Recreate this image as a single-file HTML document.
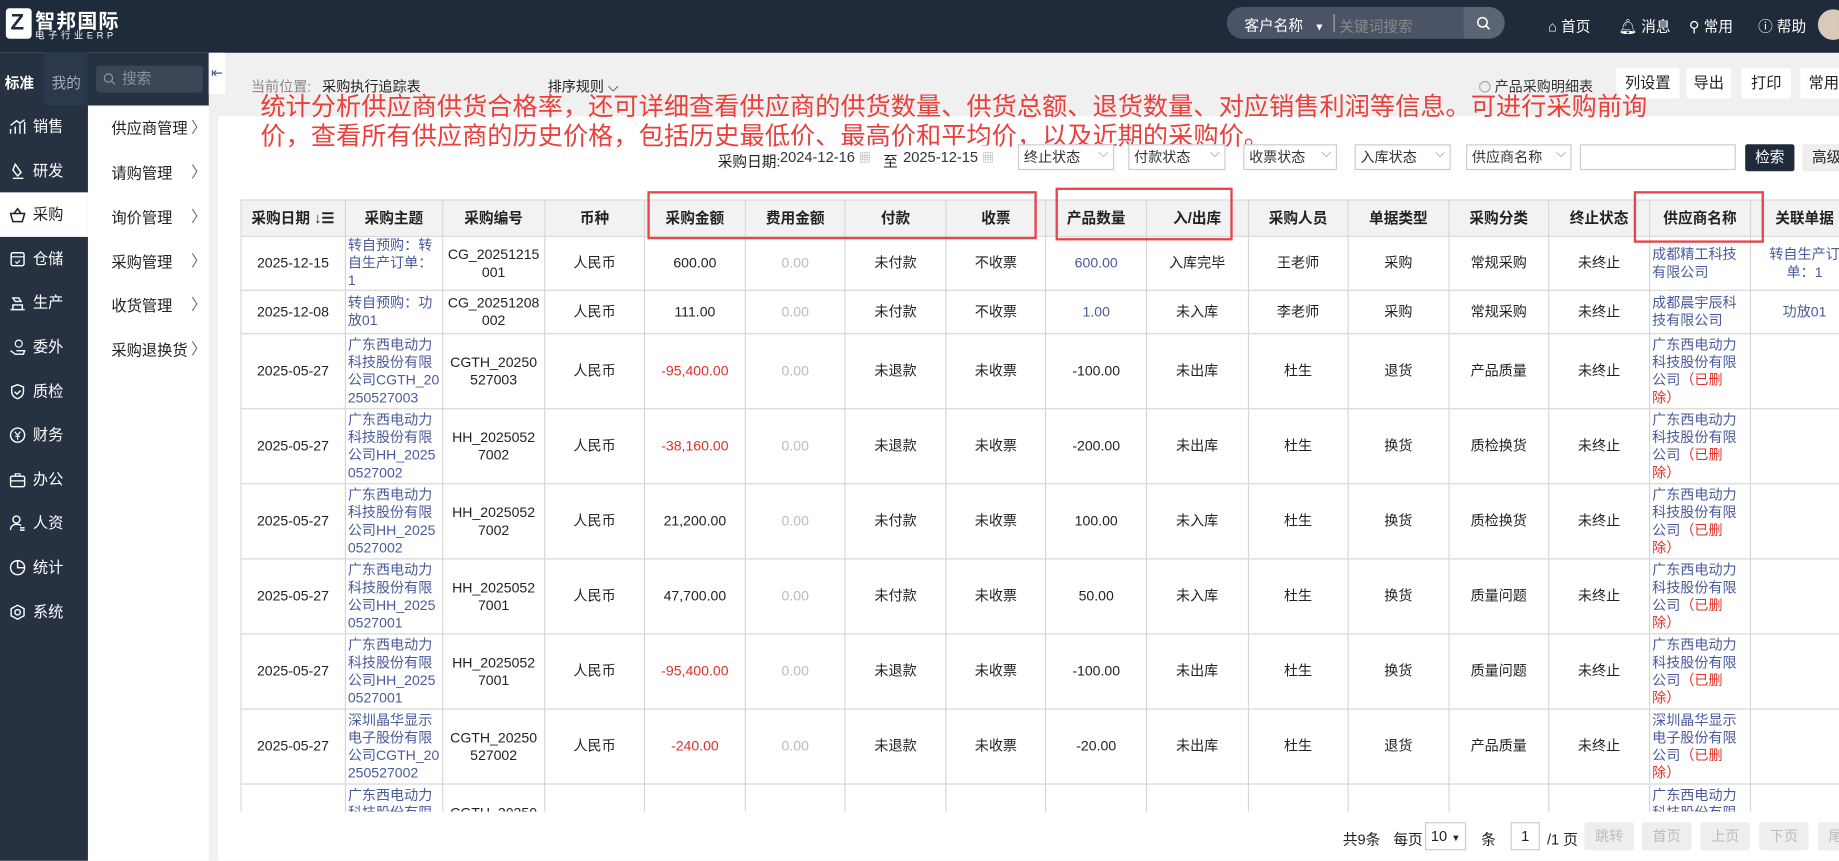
<!DOCTYPE html>
<html><head><meta charset="utf-8"><style>
*{margin:0;padding:0;box-sizing:border-box}
html,body{width:1839px;height:861px;overflow:hidden;background:#fff}
body{font-family:"Liberation Sans","Noto Sans CJK SC",sans-serif;}
#w{position:absolute;left:0;top:0;width:1568px;height:734px;transform:scale(1.17283);transform-origin:0 0;background:#f0f0f0;font-size:13px;color:#222;overflow:hidden}
.a{position:absolute}
.hd{left:0;top:0;width:1568px;height:45px;background:#1f2a3a}
.sb{left:0;top:45px;width:75px;height:689px;background:#263142}
.mi{position:absolute;left:0;width:75px;height:37.6px;color:#fff;font-size:13px;line-height:37.6px;padding-left:28px}
.mi svg{position:absolute;left:8px;top:12px}
.mi.on{background:#fff;color:#222}
.sm{position:absolute;left:95px;font-size:13px;color:#222}
.ar{position:absolute;left:163px;color:#666;font-size:13px}
.btn{position:absolute;top:58px;height:26px;background:#fff;border-radius:2px;font-size:13px;line-height:26px;text-align:center}
.sel{position:absolute;top:123px;height:22px;border:1px solid #ccc;background:#fff;font-size:12px;line-height:20px;padding-left:4px;color:#333}
.sel:after{content:"⌵";position:absolute;right:4px;top:-3px;color:#888;font-size:11px}
.sel.n:after{content:""}
table{border-collapse:collapse;table-layout:fixed;font-size:12px}
td,th{border:1px solid #d6d6d6;text-align:center;vertical-align:middle;line-height:15px;padding:0 2px;overflow:hidden;white-space:nowrap}
th{background:#f2f2f2;font-weight:bold;height:31px;font-size:12.5px}
.l{color:#4a5a9c;text-align:left}
.r{color:#e0302a}
.g{color:#bbb}
.b{color:#4a5a9c}
.red{position:absolute;border:2.5px solid #e8454a}
.pb{position:absolute;top:701px;height:24px;background:#eee;color:#bbb;font-size:12px;line-height:24px;text-align:center;width:42px;border-radius:2px}
</style></head><body><div id="w">
<div class="a hd"></div>
<div class="a" style="left:5px;top:7px;width:22px;height:26px;background:#fff;border-radius:3px"><div style="position:absolute;left:4px;top:4px;font:bold 19px/18px 'Liberation Sans';color:#1f2a3a">Z</div></div>
<div class="a" style="left:30px;top:4px;color:#fff;font-size:17px;font-weight:bold;letter-spacing:1px">智邦国际</div>
<div class="a" style="left:30px;top:25px;color:#fff;font-size:8px;letter-spacing:3px">电子行业ERP</div>
<div class="a" style="left:1046px;top:6px;width:237px;height:27px;background:#4a5466;border-radius:14px;overflow:hidden">
 <div class="a" style="left:15px;top:5px;color:#fff;font-size:12.5px">客户名称 <span style="font-size:9px;margin-left:6px">▼</span></div>
 <div class="a" style="left:91px;top:6px;width:1px;height:15px;background:#aaa"></div>
 <div class="a" style="left:96px;top:6px;color:#888;font-size:12.5px">关键词搜索</div>
 <div class="a" style="left:202px;top:0;width:35px;height:27px;background:#5c6575"></div>
 <svg class="a" style="left:213px;top:8px" width="12" height="12"><circle cx="5" cy="5" r="4" fill="none" stroke="#fff" stroke-width="1.3"/><path d="M8 8l3 3" stroke="#fff" stroke-width="1.3"/></svg>
</div>
<div class="a" style="left:1320px;top:12px;color:#fff;font-size:12.5px">⌂ 首页</div>
<div class="a" style="left:1380px;top:12px;color:#fff;font-size:12.5px">🔔︎ 消息</div>
<div class="a" style="left:1440px;top:12px;color:#fff;font-size:12.5px">⚲ 常用</div>
<div class="a" style="left:1499px;top:12px;color:#fff;font-size:12.5px">ⓘ 帮助</div>
<div class="a" style="left:1550px;top:8px;width:26px;height:26px;border-radius:13px;background:#d9c9b8"></div>

<div class="a sb"></div>
<div class="a" style="left:37px;top:45px;width:38px;height:45px;background:#2c384b"></div>
<div class="a" style="left:75px;top:45px;width:103px;height:45px;background:#263142"></div>
<div class="a" style="left:4px;top:60px;color:#fff;font-weight:bold;font-size:12.5px">标准</div>
<div class="a" style="left:44px;top:60px;color:#aab;font-size:12.5px">我的</div>
<div class="a" style="left:82px;top:56px;width:91px;height:23px;background:#3a4556;border-radius:3px;color:#8a93a0;font-size:12.5px;line-height:23px;padding-left:22px">搜索<svg style="position:absolute;left:6px;top:6px" width="11" height="11"><circle cx="4.5" cy="4.5" r="3.5" fill="none" stroke="#8a93a0" stroke-width="1.1"/><path d="M7 7l3 3" stroke="#8a93a0" stroke-width="1.1"/></svg></div>
<div class="a" style="left:75px;top:90px;width:103px;height:644px;background:#fff"></div>
<div class="a" style="left:178px;top:45px;width:14px;height:35px;background:#fff;color:#4a5a9c;font-size:12px;line-height:35px;text-align:center">⇤</div>

<div class="mi" style="top:89px"><svg width="14" height="14"><path d="M1 13V9M5 13V7M9 13V5M13 13V3M1 6l5-4 3 2 4-3" stroke="#fff" fill="none" stroke-width="1.2"/></svg>销售</div>
<div class="mi" style="top:126.6px"><svg width="14" height="14"><path d="M3 13h9M5 1l5 7-3 3-4-5z" stroke="#fff" fill="none" stroke-width="1.2"/></svg>研发</div>
<div class="mi on" style="top:164.2px"><svg width="14" height="14"><path d="M1 6h12l-2 7H3zM4 6l3-4 3 4" stroke="#222" fill="none" stroke-width="1.3"/></svg>采购</div>
<div class="mi" style="top:201.8px"><svg width="14" height="14"><rect x="1.5" y="1.5" width="11" height="11" rx="1.5" stroke="#fff" fill="none" stroke-width="1.2"/><path d="M1.5 5h11M5 9l1.5 1.5L9 8" stroke="#fff" fill="none"/></svg>仓储</div>
<div class="mi" style="top:239.4px"><svg width="14" height="14"><path d="M1 13h12M3 13V9h8v4M3 3h5l2 3H5z" stroke="#fff" fill="none" stroke-width="1.2"/></svg>生产</div>
<div class="mi" style="top:277px"><svg width="14" height="14"><circle cx="8" cy="4" r="3" stroke="#fff" fill="none"/><path d="M1 10l4 3h7l1-3H6" stroke="#fff" fill="none" stroke-width="1.2"/></svg>委外</div>
<div class="mi" style="top:314.6px"><svg width="14" height="14"><path d="M7 1l5 2v4c0 3-2.5 5-5 6-2.5-1-5-3-5-6V3z M4.5 7l2 2 3-3" stroke="#fff" fill="none" stroke-width="1.2"/></svg>质检</div>
<div class="mi" style="top:352.2px"><svg width="14" height="14"><circle cx="7" cy="7" r="6" stroke="#fff" fill="none" stroke-width="1.2"/><path d="M4.5 4L7 7l2.5-3M7 7v4M5 8h4" stroke="#fff" fill="none"/></svg>财务</div>
<div class="mi" style="top:389.8px"><svg width="14" height="14"><rect x="1" y="4" width="12" height="9" rx="1.5" stroke="#fff" fill="none" stroke-width="1.2"/><path d="M5 4V2h4v2M1 8h12" stroke="#fff" fill="none"/></svg>办公</div>
<div class="mi" style="top:427.4px"><svg width="14" height="14"><circle cx="6" cy="4" r="3" stroke="#fff" fill="none" stroke-width="1.2"/><path d="M1 13c0-4 3-5 5-5s3 .5 4 1M9 11h4M9 13h4" stroke="#fff" fill="none" stroke-width="1.2"/></svg>人资</div>
<div class="mi" style="top:465px"><svg width="14" height="14"><circle cx="7" cy="7" r="6" stroke="#fff" fill="none" stroke-width="1.2"/><path d="M7 1v6h6" stroke="#fff" fill="none" stroke-width="1.2"/></svg>统计</div>
<div class="mi" style="top:502.6px"><svg width="14" height="14"><path d="M7 1l5.5 3v6L7 13l-5.5-3V4z" stroke="#fff" fill="none" stroke-width="1.2"/><circle cx="7" cy="7" r="2.3" stroke="#fff" fill="none" stroke-width="1.2"/></svg>系统</div>

<div class="sm" style="top:99px">供应商管理</div><div class="ar" style="top:98px">〉</div>
<div class="sm" style="top:137px">请购管理</div><div class="ar" style="top:136px">〉</div>
<div class="sm" style="top:175px">询价管理</div><div class="ar" style="top:174px">〉</div>
<div class="sm" style="top:213px">采购管理</div><div class="ar" style="top:212px">〉</div>
<div class="sm" style="top:250px">收货管理</div><div class="ar" style="top:249px">〉</div>
<div class="sm" style="top:288px">采购退换货</div><div class="ar" style="top:287px">〉</div>

<div class="a" style="left:186px;top:99px;width:1382px;height:635px;background:#fff"></div>
<div class="a" style="left:214px;top:65px;font-size:12px;color:#888">当前位置: <span style="color:#222;margin-left:6px">采购执行追踪表</span></div>
<div class="a" style="left:467px;top:65px;font-size:12px;color:#222">排序规则 ⌵</div>
<div class="a" style="left:1261px;top:65px;font-size:12px;color:#333"><span style="display:inline-block;width:10px;height:10px;border:1px solid #aaa;border-radius:5px;background:#eee;vertical-align:-1px"></span> 产品采购明细表</div>
<div class="btn" style="left:1378px;width:54px">列设置</div>
<div class="btn" style="left:1438px;width:38px">导出</div>
<div class="btn" style="left:1485px;width:42px">打印</div>
<div class="btn" style="left:1535px;width:40px">常用</div>

<div class="a" style="left:222px;top:79px;color:#e8413c;font-size:21.5px;line-height:25px;white-space:nowrap">统计分析供应商供货合格率，还可详细查看供应商的供货数量、供货总额、退货数量、对应销售利润等信息。可进行采购前询<br>价，查看所有供应商的历史价格，包括历史最低价、最高价和平均价，以及近期的采购价。</div>

<div class="a" style="left:612px;top:127px;font-size:12.5px">采购日期:</div>
<div class="sel n" style="left:665px;width:82px;border:none;padding-left:0;font-size:12.5px;top:124px">2024-12-16 <span style="color:#aaa;font-size:10px">▦</span></div>
<div class="a" style="left:753px;top:127px;font-size:12.5px">至</div>
<div class="sel n" style="left:770px;width:82px;border:none;padding-left:0;font-size:12.5px;top:124px">2025-12-15 <span style="color:#aaa;font-size:10px">▦</span></div>
<div class="sel" style="left:868px;width:82px">终止状态</div>
<div class="sel" style="left:962px;width:83px">付款状态</div>
<div class="sel" style="left:1060px;width:80px">收票状态</div>
<div class="sel" style="left:1155px;width:82px">入库状态</div>
<div class="sel" style="left:1250px;width:90px">供应商名称</div>
<div class="sel n" style="left:1347px;width:133px"></div>
<div class="a" style="left:1488px;top:123px;width:42px;height:23px;background:#1f2a3a;color:#fff;font-size:12.5px;line-height:23px;text-align:center;border-radius:2px">检索</div>
<div class="a" style="left:1537px;top:123px;width:40px;height:23px;background:#eee;font-size:12.5px;line-height:23px;padding-left:8px">高级</div>

<div class="a" style="left:205px;top:170px;width:1363px;height:522px;overflow:hidden">
<table style="width:1380px">
<colgroup><col style="width:88px"><col style="width:83px"><col style="width:86px"><col style="width:85px"><col style="width:85px"><col style="width:85px"><col style="width:85px"><col style="width:85px"><col style="width:85px"><col style="width:86px"><col style="width:85px"><col style="width:85px"><col style="width:85px"><col style="width:85px"><col style="width:86px"><col style="width:91px"></colgroup>
<tr><th>采购日期 ↓☰</th><th>采购主题</th><th>采购编号</th><th>币种</th><th>采购金额</th><th>费用金额</th><th>付款</th><th>收票</th><th>产品数量</th><th>入/出库</th><th>采购人员</th><th>单据类型</th><th>采购分类</th><th>终止状态</th><th>供应商名称</th><th>关联单据</th></tr>
<tr style="height:45px"><td>2025-12-15</td><td class="l">转自预购：转<br>自生产订单：<br>1</td><td>CG_20251215<br>001</td><td>人民币</td><td>600.00</td><td class="g">0.00</td><td>未付款</td><td>不收票</td><td class="b">600.00</td><td>入库完毕</td><td>王老师</td><td>采购</td><td>常规采购</td><td>未终止</td><td class="l">成都精工科技<br>有限公司</td><td class="b">转自生产订<br>单：1</td></tr>
<tr style="height:37px"><td>2025-12-08</td><td class="l">转自预购：功<br>放01</td><td>CG_20251208<br>002</td><td>人民币</td><td>111.00</td><td class="g">0.00</td><td>未付款</td><td>不收票</td><td class="b">1.00</td><td>未入库</td><td>李老师</td><td>采购</td><td>常规采购</td><td>未终止</td><td class="l">成都晨宇辰科<br>技有限公司</td><td class="b">功放01</td></tr>
<tr style="height:64px"><td>2025-05-27</td><td class="l">广东西电动力<br>科技股份有限<br>公司CGTH_20<br>250527003</td><td>CGTH_20250<br>527003</td><td>人民币</td><td class="r">-95,400.00</td><td class="g">0.00</td><td>未退款</td><td>未收票</td><td>-100.00</td><td>未出库</td><td>杜生</td><td>退货</td><td>产品质量</td><td>未终止</td><td class="l">广东西电动力<br>科技股份有限<br>公司<span class="r">（已删<br>除）</span></td><td></td></tr>
<tr style="height:64px"><td>2025-05-27</td><td class="l">广东西电动力<br>科技股份有限<br>公司HH_2025<br>0527002</td><td>HH_2025052<br>7002</td><td>人民币</td><td class="r">-38,160.00</td><td class="g">0.00</td><td>未退款</td><td>未收票</td><td>-200.00</td><td>未出库</td><td>杜生</td><td>换货</td><td>质检换货</td><td>未终止</td><td class="l">广东西电动力<br>科技股份有限<br>公司<span class="r">（已删<br>除）</span></td><td></td></tr>
<tr style="height:64px"><td>2025-05-27</td><td class="l">广东西电动力<br>科技股份有限<br>公司HH_2025<br>0527002</td><td>HH_2025052<br>7002</td><td>人民币</td><td>21,200.00</td><td class="g">0.00</td><td>未付款</td><td>未收票</td><td>100.00</td><td>未入库</td><td>杜生</td><td>换货</td><td>质检换货</td><td>未终止</td><td class="l">广东西电动力<br>科技股份有限<br>公司<span class="r">（已删<br>除）</span></td><td></td></tr>
<tr style="height:64px"><td>2025-05-27</td><td class="l">广东西电动力<br>科技股份有限<br>公司HH_2025<br>0527001</td><td>HH_2025052<br>7001</td><td>人民币</td><td>47,700.00</td><td class="g">0.00</td><td>未付款</td><td>未收票</td><td>50.00</td><td>未入库</td><td>杜生</td><td>换货</td><td>质量问题</td><td>未终止</td><td class="l">广东西电动力<br>科技股份有限<br>公司<span class="r">（已删<br>除）</span></td><td></td></tr>
<tr style="height:64px"><td>2025-05-27</td><td class="l">广东西电动力<br>科技股份有限<br>公司HH_2025<br>0527001</td><td>HH_2025052<br>7001</td><td>人民币</td><td class="r">-95,400.00</td><td class="g">0.00</td><td>未退款</td><td>未收票</td><td>-100.00</td><td>未出库</td><td>杜生</td><td>换货</td><td>质量问题</td><td>未终止</td><td class="l">广东西电动力<br>科技股份有限<br>公司<span class="r">（已删<br>除）</span></td><td></td></tr>
<tr style="height:64px"><td>2025-05-27</td><td class="l">深圳晶华显示<br>电子股份有限<br>公司CGTH_20<br>250527002</td><td>CGTH_20250<br>527002</td><td>人民币</td><td class="r">-240.00</td><td class="g">0.00</td><td>未退款</td><td>未收票</td><td>-20.00</td><td>未出库</td><td>杜生</td><td>退货</td><td>产品质量</td><td>未终止</td><td class="l">深圳晶华显示<br>电子股份有限<br>公司<span class="r">（已删<br>除）</span></td><td></td></tr>
<tr style="height:64px"><td>2025-05-27</td><td class="l">广东西电动力<br>科技股份有限<br>公司CGTH_20<br>250527001</td><td>CGTH_20250<br>527001</td><td>人民币</td><td class="r">-10,000.00</td><td class="g">0.00</td><td>未退款</td><td>未收票</td><td>-100.00</td><td>未出库</td><td>杜生</td><td>退货</td><td>产品质量</td><td>未终止</td><td class="l">广东西电动力<br>科技股份有限<br>公司<span class="r">（已删<br>除）</span></td><td></td></tr>
</table></div>
<div class="red" style="left:552px;top:163px;width:332px;height:41px"></div>
<div class="red" style="left:900px;top:160px;width:151px;height:45px"></div>
<div class="red" style="left:1393px;top:163px;width:111px;height:44px"></div>

<div class="a" style="left:1145px;top:705px;font-size:12.5px">共9条</div>
<div class="a" style="left:1188px;top:705px;font-size:12.5px">每页</div>
<div class="a" style="left:1215px;top:701px;width:35px;height:24px;border:1px solid #ccc;font-size:12.5px;line-height:22px;padding-left:4px">10 <span style="font-size:8px">▼</span></div>
<div class="a" style="left:1263px;top:705px;font-size:12.5px">条</div>
<div class="a" style="left:1288px;top:701px;width:25px;height:24px;border:1px solid #ccc;font-size:12.5px;line-height:22px;text-align:center">1</div>
<div class="a" style="left:1319px;top:705px;font-size:12.5px">/1 页</div>
<div class="pb" style="left:1351px">跳转</div>
<div class="pb" style="left:1400px">首页</div>
<div class="pb" style="left:1450px">上页</div>
<div class="pb" style="left:1500px">下页</div>
<div class="pb" style="left:1550px">尾页</div>
</div></body></html>
